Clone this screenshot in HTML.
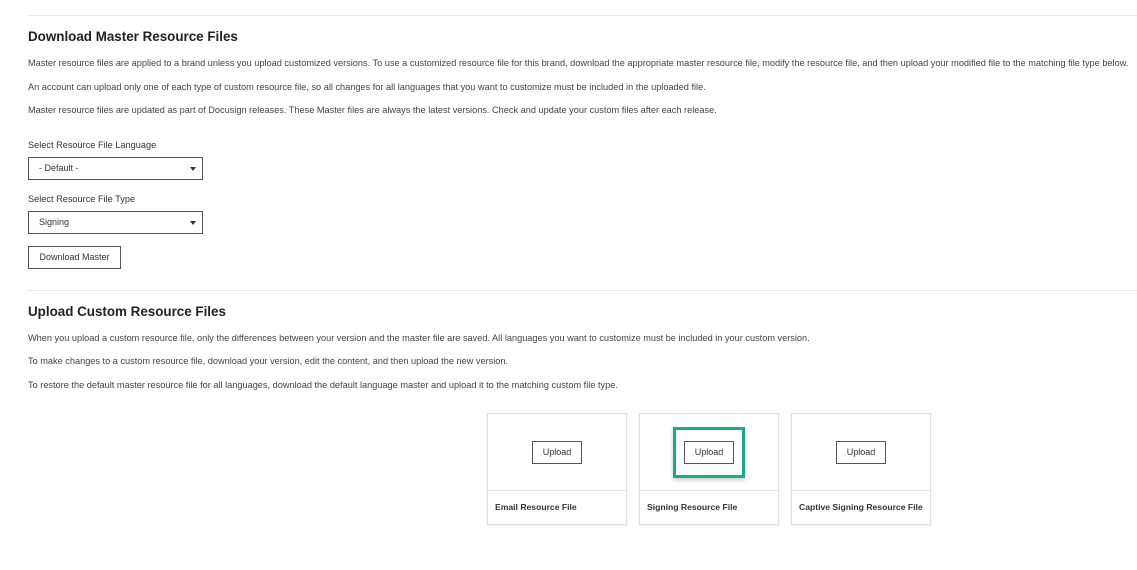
<!DOCTYPE html><html><head><style>
body{margin:0;background:#fff;font-family:"Liberation Sans",sans-serif;color:#333;width:1137px;height:570px;overflow:hidden;position:relative}
.a{position:absolute}
.hr{position:absolute;left:28px;right:0;height:1px;background:#e8e8e8}
h2{position:absolute;margin:0;font-size:13.4px;font-weight:bold;color:#222;left:28px}
p{position:absolute;margin:0;left:28px;font-size:9.2px;color:#444;white-space:nowrap}
.lbl{font-size:9.2px;color:#333}
.sel{position:absolute;left:28px;width:173px;height:21px;border:1px solid #555;font-size:9px;line-height:21px;box-sizing:content-box}
.sel span{margin-left:10px}
.sel i{position:absolute;right:6px;top:9px;border-left:3px solid transparent;border-right:3px solid transparent;border-top:4px solid #333}
.btn{position:absolute;border:1px solid #555;font-size:9px;text-align:center;background:#fff;color:#333}
.card{position:absolute;top:413px;width:138px;height:110px;border:1px solid #ddd;box-shadow:0 1px 2px rgba(0,0,0,.08)}
.card .d{position:absolute;left:0;right:0;top:76px;height:1px;background:#e5e5e5}
.card .t{position:absolute;left:7px;top:88px;font-size:8.6px;font-weight:bold;color:#333;white-space:nowrap}
.card .btn{left:44px;top:27px;width:48px;height:21px;line-height:21px}
</style></head><body>
<div class="hr" style="top:15px"></div>
<h2 style="top:29px">Download Master Resource Files</h2>
<p style="top:58px">Master resource files are applied to a brand unless you upload customized versions. To use a customized resource file for this brand, download the appropriate master resource file, modify the resource file, and then upload your modified file to the matching file type below.</p>
<p style="top:82px">An account can upload only one of each type of custom resource file, so all changes for all languages that you want to customize must be included in the uploaded file.</p>
<p style="top:105px">Master resource files are updated as part of Docusign releases. These Master files are always the latest versions. Check and update your custom files after each release.</p>
<p class="lbl" style="top:140px">Select Resource File Language</p>
<div class="sel" style="top:157px"><span>- Default -</span><i></i></div>
<p class="lbl" style="top:194px">Select Resource File Type</p>
<div class="sel" style="top:211px"><span>Signing</span><i></i></div>
<div class="btn" style="left:28px;top:246px;width:91px;height:21px;line-height:21px">Download Master</div>
<div class="hr" style="top:290px"></div>
<h2 style="top:304px">Upload Custom Resource Files</h2>
<p style="top:333px">When you upload a custom resource file, only the differences between your version and the master file are saved. All languages you want to customize must be included in your custom version.</p>
<p style="top:356px">To make changes to a custom resource file, download your version, edit the content, and then upload the new version.</p>
<p style="top:380px">To restore the default master resource file for all languages, download the default language master and upload it to the matching custom file type.</p>
<div class="card" style="left:487px"><div class="btn">Upload</div><div class="d"></div><div class="t">Email Resource File</div></div>
<div class="card" style="left:639px"><div class="a" style="left:33px;top:13px;width:66px;height:45px;border:3px solid #1aaa8a;box-shadow:0 2px 4px rgba(0,0,0,.2)"></div><div class="btn">Upload</div><div class="d"></div><div class="t">Signing Resource File</div></div>
<div class="card" style="left:791px"><div class="btn">Upload</div><div class="d"></div><div class="t">Captive Signing Resource File</div></div>
</body></html>
